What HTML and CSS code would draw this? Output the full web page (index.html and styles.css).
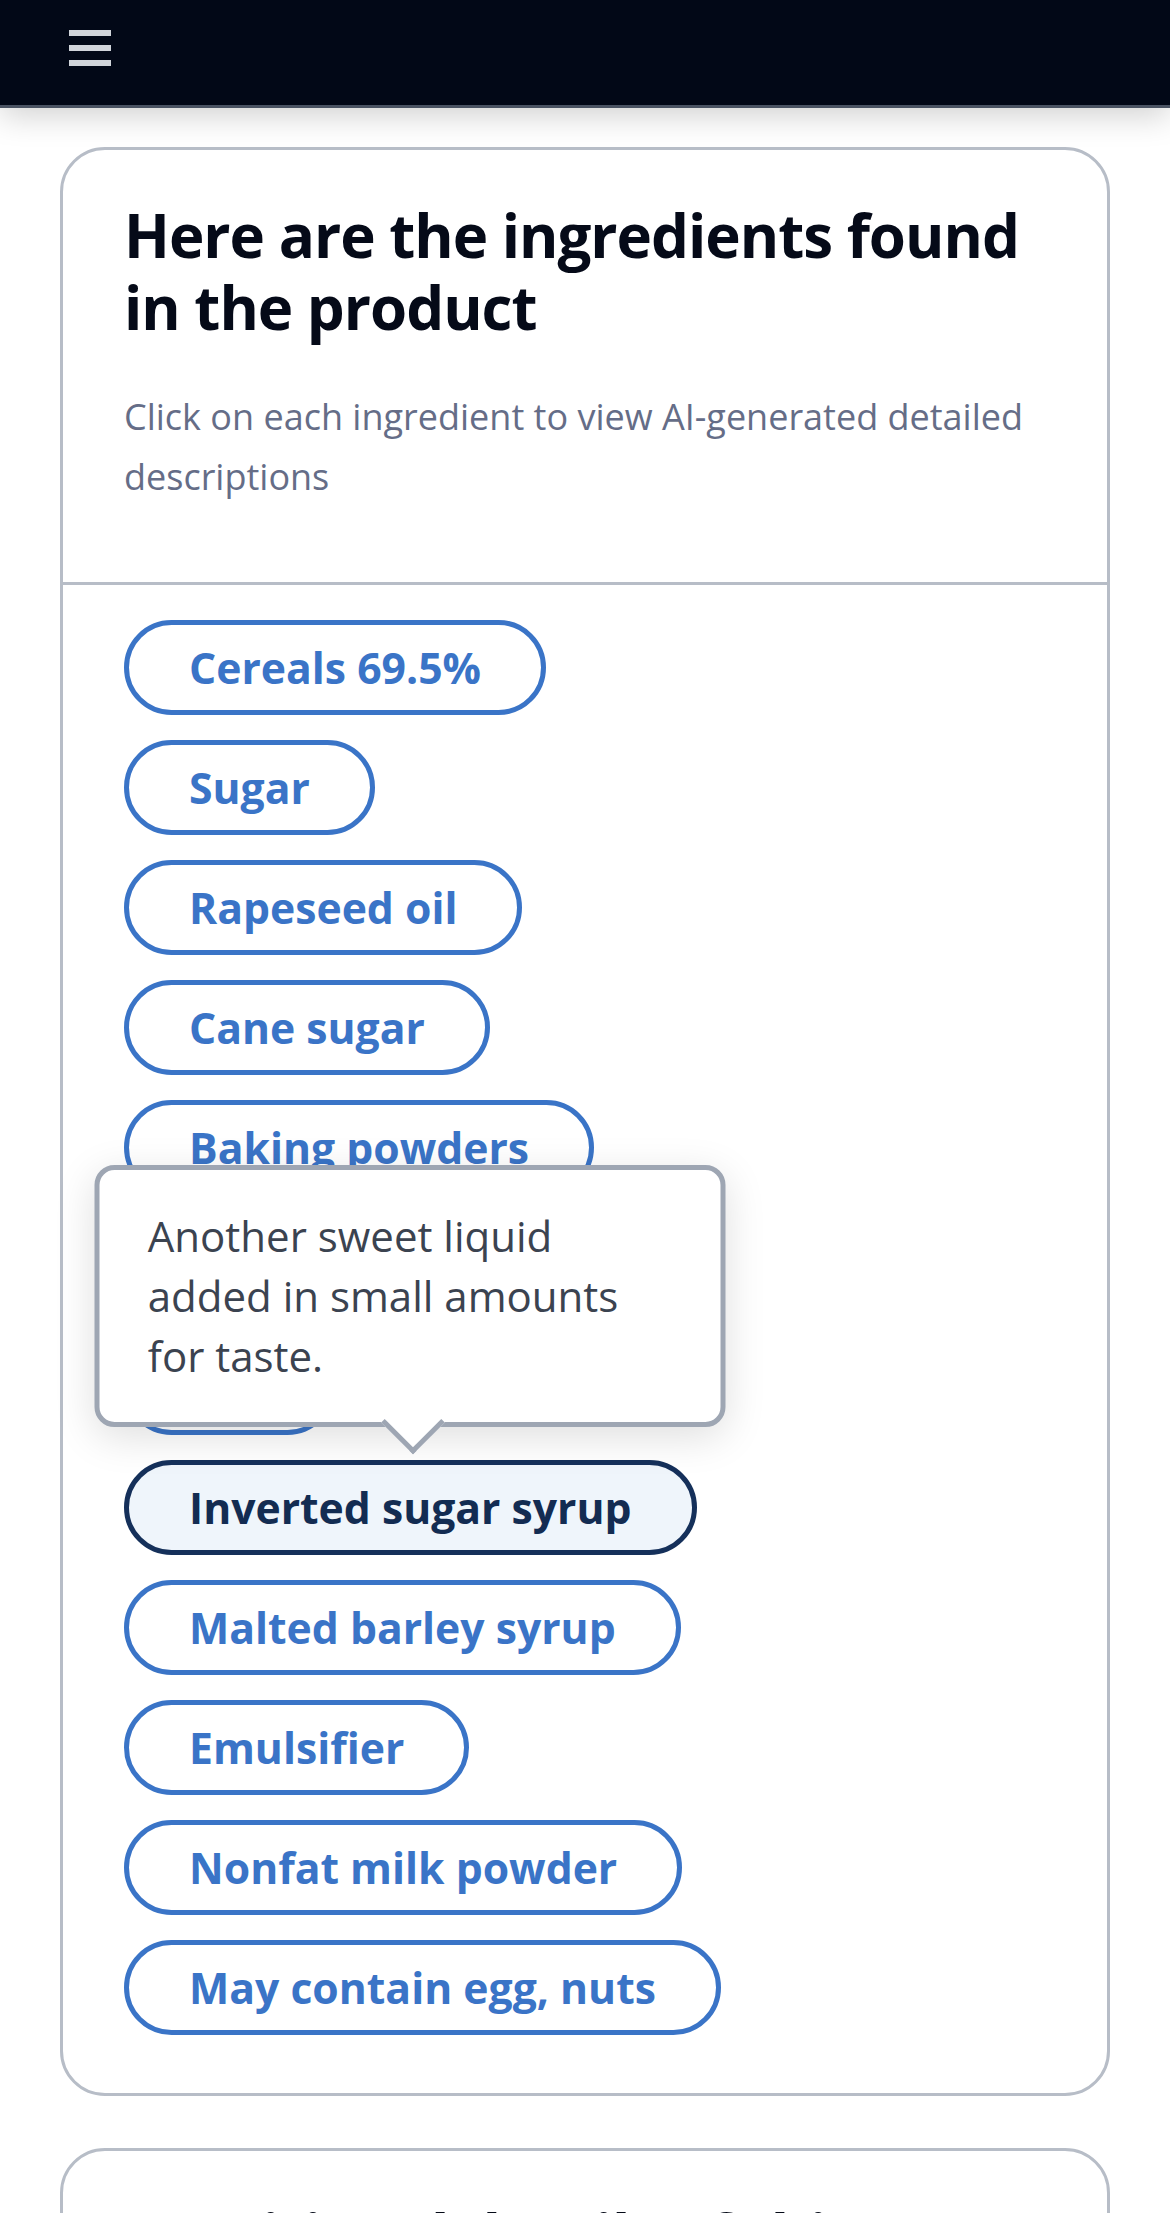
FILE: index.html
```html
<!DOCTYPE html>
<html lang="en">
<head>
<meta charset="utf-8">
<title>Ingredients</title>
<link rel="stylesheet" href="styles.css">
</head>
<body>
<header class="topbar">
  <button class="menu-btn" aria-label="Menu"><span></span><span></span><span></span></button>
</header>
<main class="page">
  <section class="card">
    <div class="card-head">
      <h1 class="card-title">Here are the ingredients found in the product</h1>
      <p class="card-sub">Click on each ingredient to view AI-generated detailed descriptions</p>
    </div>
    <ul class="pill-list">
      <li class="pill-item"><button class="pill">Cereals 69.5%</button></li>
      <li class="pill-item"><button class="pill">Sugar</button></li>
      <li class="pill-item"><button class="pill">Rapeseed oil</button></li>
      <li class="pill-item"><button class="pill">Cane sugar</button></li>
      <li class="pill-item"><button class="pill">Baking powders</button></li>
      <li class="pill-item"><button class="pill">Glucose syrup</button></li>
      <li class="pill-item"><button class="pill">Salt</button></li>
      <li class="pill-item">
        <button class="pill pill--active">Inverted sugar syrup</button>
        <div class="tooltip">Another sweet liquid added in small amounts for taste.</div>
      </li>
      <li class="pill-item"><button class="pill">Malted barley syrup</button></li>
      <li class="pill-item"><button class="pill">Emulsifier</button></li>
      <li class="pill-item"><button class="pill">Nonfat milk powder</button></li>
      <li class="pill-item"><button class="pill">May contain egg, nuts</button></li>
    </ul>
  </section>
  <section class="card card--next">
    <div class="card-head">
      <h2 class="card-title">Nutritional details of this product</h2>
    </div>
  </section>
</main>
</body>
</html>
```
FILE: styles.css
```css
* { box-sizing: border-box; }

body {
  margin: 0;
  background: #ffffff;
  font-family: "Open Sans", "Noto Sans", "Liberation Sans", sans-serif;
}

.topbar {
  position: relative;
  z-index: 3;
  height: 108px;
  padding: 30px 0 0 69px;
  background: #020817;
  border-bottom: 3px solid #4a5363;
  box-shadow: 0 8px 30px rgba(0, 0, 0, 0.18);
}

.menu-btn {
  display: flex;
  flex-direction: column;
  gap: 9px;
  width: 42px;
  padding: 0;
  border: 0;
  background: none;
}

.menu-btn span {
  display: block;
  height: 6px;
  background: #d1d5db;
}

.page {
  padding: 39px 60px 0;
}

.card {
  background: #ffffff;
  border: 3px solid #b7bdc7;
  border-radius: 45px;
}

.card--next {
  margin-top: 52px;
}

.card-head {
  padding: 49px 61px 75px;
}

.card--next .card-head {
  padding-top: 48px;
}

.card-title {
  margin: 0;
  font-size: 60px;
  line-height: 72px;
  font-weight: 700;
  letter-spacing: -1px;
  color: #050a18;
}

.card-sub {
  margin: 44px 0 0;
  font-size: 36px;
  line-height: 60px;
  font-weight: 400;
  color: #656d87;
}

.pill-list {
  list-style: none;
  margin: 0;
  padding: 35px 61px 58px;
  border-top: 3px solid #b7bdc7;
  display: flex;
  flex-direction: column;
  align-items: flex-start;
  gap: 25px;
}

.pill-item {
  position: relative;
}

.pill {
  display: block;
  padding: 12px 60px;
  font-family: "Open Sans", "Noto Sans", "Liberation Sans", sans-serif;
  font-size: 42.7px;
  line-height: 61px;
  font-weight: 700;
  color: #3a74c7;
  background: #ffffff;
  border: 5px solid #3a74c7;
  border-radius: 999px;
  white-space: nowrap;
}

.pill--active {
  color: #132c52;
  background: #eff5fb;
  border-color: #15305a;
}

.tooltip {
  position: absolute;
  z-index: 5;
  left: 50%;
  bottom: calc(100% + 33px);
  transform: translateX(-50%);
  width: 631px;
  padding: 36px 48px;
  font-size: 42px;
  line-height: 60px;
  font-weight: 400;
  color: #3b4350;
  background: #ffffff;
  border: 5px solid #9ea6b3;
  border-radius: 20px;
  box-shadow: 0 10px 40px rgba(0, 0, 0, 0.13);
}

.tooltip::after {
  content: "";
  position: absolute;
  left: 50%;
  bottom: -23px;
  width: 40px;
  height: 40px;
  margin-left: -20px;
  background: #ffffff;
  border-right: 5px solid #9ea6b3;
  border-bottom: 5px solid #9ea6b3;
  transform: rotate(45deg);
}
```
